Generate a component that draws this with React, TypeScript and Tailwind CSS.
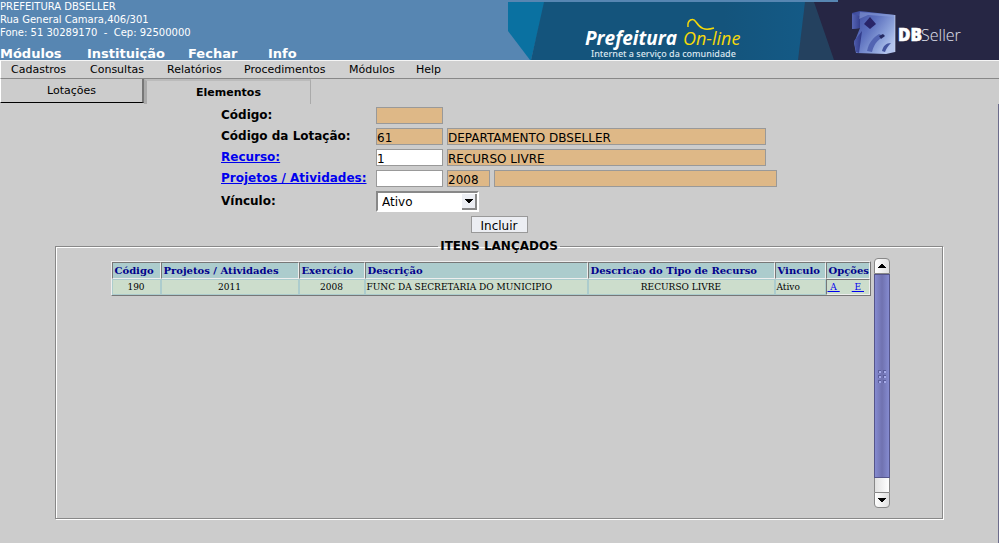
import type { ReactNode } from "react";

const topLinks = [
  { label: "Módulos", width: "w-[87px]" },
  { label: "Instituição", width: "w-[101px]" },
  { label: "Fechar", width: "w-20" },
  { label: "Info", width: "w-12" },
];

const menuItems = [
  { label: "Cadastros", width: "w-[79px]" },
  { label: "Consultas", width: "w-[77px]" },
  { label: "Relatórios", width: "w-[77px]" },
  { label: "Procedimentos", width: "w-[105px]" },
  { label: "Módulos", width: "w-[67px]" },
  { label: "Help", width: "w-10" },
];

const columns = [
  { title: "Código", width: "w-[49px]", value: "190", align: "text-center" },
  { title: "Projetos / Atividades", width: "w-[138px]", value: "2011", align: "text-center" },
  { title: "Exercício", width: "w-[66px]", value: "2008", align: "text-center" },
  { title: "Descrição", width: "w-[223px]", value: "FUNC DA SECRETARIA DO MUNICIPIO", align: "text-left" },
  { title: "Descricao do Tipo de Recurso", width: "w-[187px]", value: "RECURSO LIVRE", align: "text-center" },
  { title: "Vinculo", width: "w-[51px]", value: "Ativo", align: "text-left" },
];

function Banner() {
  return (
    <svg className="h-[60px] w-[491px] shrink-0" viewBox="0 0 491 60" role="img" aria-label="Prefeitura On-line, DBSeller">
      <defs>
        <linearGradient id="cube" x1="0" x2="1" y1="0" y2="0.7">
          <stop offset="0" stopColor="#3a4699" />
          <stop offset="0.45" stopColor="#5c70be" />
          <stop offset="0.8" stopColor="#8fa5dc" />
          <stop offset="1" stopColor="#b4c5ee" />
        </linearGradient>
        <linearGradient id="side" x1="0" x2="1" y1="0" y2="0">
          <stop offset="0" stopColor="#5665b4" />
          <stop offset="1" stopColor="#2d3685" />
        </linearGradient>
        <linearGradient id="blue" x1="0" x2="1" y1="0" y2="0">
          <stop offset="0.7" stopColor="#14547c" />
          <stop offset="1" stopColor="#145a86" />
        </linearGradient>
      </defs>
      <path d="M0 2H37L23 60H22L0 31Z" fill="#0a71a1" />
      <path d="M36 2H298V60H23Z" fill="url(#blue)" />
      <path d="M297 2H310L328 60H290Z" fill="#24415f" />
      <path d="M297 2H330V0H491V60H326L306 2Z" fill="#262644" />
      <text x="77" y="45" fill="#fff" fontFamily="'Open Sans', sans-serif" fontWeight="700" fontStyle="italic" fontSize="19">Prefeitura</text>
      <text x="175" y="45" fill="#f5d90a" fontFamily="'Open Sans', sans-serif" fontWeight="400" fontStyle="italic" fontSize="18">On-line</text>
      <path d="M180 27C179 20 185 17 188 22C192 28 196 31 206 28" fill="none" stroke="#f5d90a" strokeWidth="1.5" />
      <text x="83" y="57" fill="#dbe7f0" fontFamily="'Noto Sans', sans-serif" fontWeight="500" fontSize="9">Internet a serviço da comunidade</text>
      <path d="M344 13L352 11L387 15V52L378 54L348 53L346 43L352 28L344 29Z" fill="url(#cube)" />
      <path d="M344 14L352 16V28L344 29ZM346 41L354 31L351 53L348 52Z" fill="url(#side)" />
      <path d="M352 12L387 15V17L360 15L351 19Z" fill="#8fa3dc" opacity="0.5" />
      <path d="M362 17L368 24L362 29L356 24Z" fill="#292568" />
      <path d="M359 51C361 42 365 38 371 34L376 36C368 41 366 45 364 52Z" fill="#5264b2" />
      <path d="M371 36L375 34L377 36L373 39Z" fill="#252a61" />
      <path d="M374 51C375 46 378 43 383 43C380 46 378 49 377 52Z" fill="#4455a0" />
      <path d="M387 15V52" stroke="#d5def5" strokeWidth="1" opacity="0.6" />
      <text x="390" y="41" fill="#fff" stroke="#fff" strokeWidth="0.6" fontFamily="'Open Sans', sans-serif" fontWeight="800" fontSize="17">DB</text>
      <text x="413" y="41" fill="#e1e2ed" fontFamily="'Open Sans', sans-serif" fontWeight="300" fontSize="16">Seller</text>
    </svg>
  );
}

function Field({ id, label, value = "", width, editable = false }: { id: string; label: string; value?: string; width: string; editable?: boolean }) {
  return (
    <input
      id={id}
      aria-label={label}
      defaultValue={value}
      readOnly={!editable}
      className={`h-[17px] border border-[#999] pt-[2px] text-[12px] leading-[14px] outline-none ${width} ${editable ? "bg-white" : "bg-[#deb887]"}`}
    />
  );
}

function Row({ id, label, link = false, children }: { id: string; label: string; link?: boolean; children: ReactNode }) {
  return (
    <div className="flex items-center">
      <label htmlFor={id} className={`w-[155px] shrink-0 font-bold whitespace-nowrap ${link ? "text-[#0000ee]" : ""}`}>
        {link ? <a href="#buscar" className="underline">{label}</a> : label}
      </label>
      <div className="flex gap-1">{children}</div>
    </div>
  );
}

function Arrow({ up = false }: { up?: boolean }) {
  return (
    <svg className="h-1 w-[9px]" viewBox="0 0 9 4" aria-hidden="true" shapeRendering="crispEdges">
      <path d={up ? "M0 4H9L5 0H4Z" : "M0 0H9L5 4H4Z"} fill="#000" />
    </svg>
  );
}

function Scrollbar() {
  return (
    <div className="flex h-[250px] w-4 shrink-0 flex-col">
      <button aria-label="Rolar para cima" className="flex h-4 items-center justify-center rounded-t-sm border border-[#888] bg-linear-to-r from-white to-[#e0e0e0]"><Arrow up /></button>
      <div className="flex flex-1 flex-col border-x border-[#888] bg-linear-to-r from-[#e2e2e2] to-white">
        <div className="-mx-px flex h-[204px] items-center justify-center border border-[#55558a] bg-linear-to-r from-[#858bd0] via-[#7072b0] to-[#858bd0]">
          <div className="grid grid-cols-2 gap-[2px]">
            {[0, 1, 2, 3, 4, 5].map((dot) => <span key={dot} className="size-[3px] border-t border-l border-[#5b5e9c] bg-[#a5aae8]" />)}
          </div>
        </div>
      </div>
      <button aria-label="Rolar para baixo" className="flex h-4 items-center justify-center rounded-b-sm border border-[#888] bg-linear-to-r from-white to-[#e0e0e0]"><Arrow /></button>
    </div>
  );
}

export default function App() {
  return (
    <div className="flex min-h-screen flex-col bg-[#ccc] font-['DejaVu_Sans',sans-serif] text-[12px] text-black">
      <header className="flex h-[60px] justify-between overflow-hidden bg-[#5786b2] text-white">
        <div className="whitespace-nowrap">
          <address className="h-[46px] text-[10px] leading-[13px] not-italic">
            <p>PREFEITURA DBSELLER</p>
            <p>Rua General Camara,406/301</p>
            <p className="whitespace-pre">Fone: 51 30289170  -  Cep: 92500000</p>
          </address>
          <nav aria-label="Principal" className="flex text-[13px] leading-4 font-bold">
            {topLinks.map((item) => <a key={item.label} href="#principal" className={item.width}>{item.label}</a>)}
          </nav>
        </div>
        <Banner />
      </header>
      <nav aria-label="Menu" className="flex h-[19px] border-t border-b border-l border-t-[#f5f5f5] border-b-[#888] border-l-white bg-[#d0d0d0] pl-[10px] text-[11px] leading-[17px]">
        {menuItems.map((item) => <a key={item.label} href="#menu" className={item.width}>{item.label}</a>)}
      </nav>
      <div role="tablist" className="flex h-[25px] text-[11px]">
        <button role="tab" aria-selected="false" className="mb-px w-36 border-r-2 border-b border-l border-r-[#777] border-b-black border-l-white pt-px">Lotações</button>
        <button role="tab" aria-selected="true" className="w-[167px] border-t-2 border-r border-l-3 border-[#aaa] border-t-[#bbb] pt-px font-bold">Elementos</button>
      </div>
      <main className="flex-1 border-r border-[#6c6c8c] pt-[3px]">
        <form onSubmit={(event) => event.preventDefault()}>
          <div className="mx-auto flex w-[556px] flex-col gap-1 leading-[17px]">
            <Row id="codigo" label="Código:"><Field id="codigo" label="Código" width="w-[67px]" /></Row>
            <Row id="lotacao" label="Código da Lotação:">
              <Field id="lotacao" label="Código da Lotação" value="61" width="w-[67px]" />
              <Field id="lotacao-nome" label="Nome da lotação" value="DEPARTAMENTO DBSELLER" width="w-[319px]" />
            </Row>
            <Row id="recurso" label="Recurso:" link>
              <Field id="recurso" label="Recurso" value="1" width="w-[67px]" editable />
              <Field id="recurso-nome" label="Nome do recurso" value="RECURSO LIVRE" width="w-[319px]" />
            </Row>
            <Row id="projeto" label="Projetos / Atividades:" link>
              <Field id="projeto" label="Projetos / Atividades" width="w-[67px]" editable />
              <Field id="projeto-ano" label="Ano" value="2008" width="w-[43px]" />
              <Field id="projeto-nome" label="Nome do projeto" width="w-[283px]" />
            </Row>
            <Row id="vinculo" label="Vínculo:">
              <div className="relative">
                <select id="vinculo" className="block h-[21px] w-[103px] appearance-none border-2 border-t-[#888] border-r-white border-b-white border-l-[#888] bg-white pt-px pl-1 text-[12px] leading-4">
                  <option>Ativo</option>
                  <option>Inativo</option>
                </select>
                <span className="pointer-events-none absolute top-[3px] right-[2px] flex h-4 w-[15px] items-center justify-center border-r-2 border-b-2 border-[#888] bg-[#eceef3]"><Arrow /></span>
              </div>
            </Row>
          </div>
          <button className="mx-auto mt-1 block h-[17px] w-[57px] border border-[#999] bg-[#eceef3] pt-[2px] leading-[14px]">Incluir</button>
        </form>
        <fieldset className="mx-[55px] mt-[5px] h-[281px] border border-[#888] shadow-[1px_1px_0_#fff,inset_1px_1px_0_#fff]">
          <legend className="mx-auto px-[2px] leading-[17px] font-bold">ITENS LANÇADOS</legend>
          <div className="mt-[3px] flex items-start justify-center gap-[3px] pl-[2px]">
            <table className="mt-[3px] w-[760px] table-fixed border-separate border-spacing-0 border border-t-[#eee] border-r-[#777] border-b-[#777] border-l-[#eee] bg-[#accccd] font-['DejaVu_Serif',serif] text-[10px] whitespace-nowrap">
              <thead>
                <tr className="text-left leading-[15px] text-[#00008b]">
                  {columns.map((column) => (
                    <th key={column.title} className={`border border-t-[#777] border-r-[#eee] border-b-[#eee] border-l-[#777] pl-[2px] ${column.width}`}>{column.title}</th>
                  ))}
                  <th className="border border-t-[#777] border-r-[#eee] border-b-[#eee] border-l-[#777] pl-[2px]">Opções</th>
                </tr>
              </thead>
              <tbody>
                <tr className="bg-[#ccddcc] font-['DejaVu_Serif_Condensed','DejaVu_Serif',serif] leading-[14px]">
                  {columns.map((column) => (
                    <td key={column.title} className={`border border-[#accccd] px-px ${column.align}`}>{column.value}</td>
                  ))}
                  <td className="border border-t-[#777] border-r-[#eee] border-b-[#eee] border-l-[#777] px-px">
                    <a href="#alterar" className="mr-3 whitespace-pre text-[#0000ee] underline"> A </a>
                    <a href="#excluir" className="whitespace-pre text-[#0000ee] underline"> E </a>
                  </td>
                </tr>
              </tbody>
            </table>
            <Scrollbar />
          </div>
        </fieldset>
      </main>
    </div>
  );
}
